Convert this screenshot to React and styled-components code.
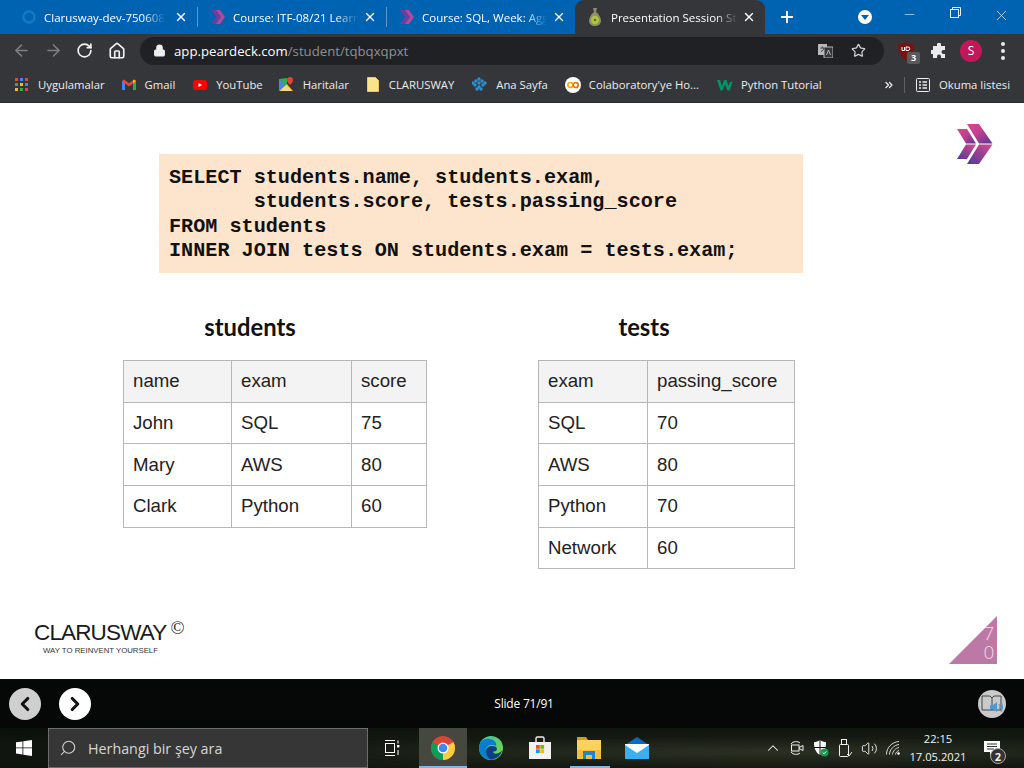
import React from "react";
import styled, { createGlobalStyle } from "styled-components";
import { ArrowLeft, ArrowRight, RotateCw, Home, Lock, Star, Plus, X, Minus, ChevronLeft, ChevronRight, ChevronUp, Search, Volume2, ChevronsRight } from "lucide-react";

const Global = createGlobalStyle`
  html, body { margin: 0; padding: 0; background: #fff; }
  * { box-sizing: border-box; }
  #root { width: 1024px; height: 768px; overflow: hidden; }
`;
const Screen = styled.div`
  width: 1024px; height: 768px; display: flex; flex-direction: column;
  font-family: "Open Sans", "Liberation Sans", sans-serif; position: relative;
`;
const TabBar = styled.div`
  height: 34px; background: #0063b1; display: flex; align-items: stretch; flex: none;
`;
const Tab = styled.div`
  width: ${p => p.$w}px; display: flex; align-items: center; position: relative; padding-left: ${p => p.$pad}px; gap: ${p => p.$gap}px;
  color: #fff; font-size: 11.5px;
  background: ${p => (p.$active ? "#35363a" : "transparent")};
  border-radius: ${p => (p.$active ? "9px 9px 0 0" : "0")};
  ${p => p.$sep && `&::after { content: ""; position: absolute; right: 0; top: 7px; bottom: 7px; width: 1px; background: #5b95c9; }`}
`;
const TabTitle = styled.span`
  width: ${p => p.$w}px; white-space: nowrap; overflow: hidden; flex: none;
  -webkit-mask-image: linear-gradient(90deg, #000 82%, transparent 100%);
  mask-image: linear-gradient(90deg, #000 82%, transparent 100%);
`;
const TabClose = styled.span`
  position: absolute; right: ${p => p.$r}px; top: 10px; display: flex; color: #fff;
`;
const NewTab = styled.div`
  width: 44px; display: flex; align-items: center; justify-content: center; color: #fff;
`;
const TabSpacer = styled.div`flex: 1;`;
const DownBadge = styled.div`
  width: 14px; height: 14px; border-radius: 50%; background: #fff; align-self: center; margin-right: 14px; display: flex; align-items: center; justify-content: center;
  &::after { content: ""; border-left: 4px solid transparent; border-right: 4px solid transparent; border-top: 5px solid #0063b1; }
`;
const WinBtn = styled.div`
  width: 46px; display: flex; align-items: flex-start; padding-top: 7px; justify-content: center; color: #e4eef7;
`;
const Toolbar = styled.div`
  height: 33px; background: #35363a; display: flex; align-items: center; flex: none; padding-left: 12px; color: #fff;
`;
const NavIcon = styled.span`
  width: ${p => p.$w || 32}px; display: flex; color: ${p => (p.$dim ? "#7d7f83" : "#f1f3f4")}; align-items: center;
`;
const UrlPill = styled.div`
  width: 744px; height: 28px; border-radius: 14px; background: #202124; display: flex; align-items: center; padding-left: 13px; font-size: 13.2px; color: #fff; flex: none; position: relative;
`;
const UrlLock = styled.span`display: flex; margin-right: 8px; color: #eee;`;
const UrlDim = styled.span`color: #8f9194;`;
const UrlRight = styled.div`
  margin-left: auto; display: flex; align-items: center; gap: 18px; padding-right: 18px; color: #cfd1d3;
`;
const ExtGroup = styled.div`
  display: flex; align-items: center; margin-left: 14px; position: relative;
`;
const Ub = styled.div`position: relative; width: 16px; height: 18px; margin-right: 17px;`;
const UbCount = styled.span`
  position: absolute; left: 9px; top: 10px; width: 13px; height: 12px; background: #595a5c; color: #fff; font-size: 9px; font-weight: 700; border-radius: 2px; display: flex; align-items: center; justify-content: center;
`;
const Avatar = styled.div`
  width: 22px; height: 22px; border-radius: 50%; background: #c2185b; color: #fff; font-size: 12px; display: flex; align-items: center; justify-content: center; margin-left: 13px;
`;
const Dots = styled.div`
  display: flex; flex-direction: column; gap: 3px; margin-left: 19px;
  & > i { width: 4px; height: 4px; border-radius: 50%; background: #e8eaed; display: block; }
`;
const Bookmarks = styled.div`
  height: 36px; background: #35363a; display: flex; align-items: center; flex: none; font-size: 11.3px; color: #eceded; padding-left: 15px; border-bottom: 1px solid #27282b; position: relative;
`;
const Mark = styled.div`
  display: flex; align-items: center; gap: ${p => p.$gap ?? 9}px; white-space: nowrap; margin-right: ${p => p.$mr ?? 17}px;
`;
const MarkEnd = styled.div`
  margin-left: auto; display: flex; align-items: center; padding-right: 14px; color: #eceded;
`;
const MarkDivider = styled.span`width: 1px; height: 16px; background: #5f6063; margin: 0 11px 0 9px;`;
const ReadingLabel = styled.span`margin-left: 9px; white-space: nowrap;`;

const Slide = styled.main`
  flex: 1; background: #fff; position: relative; display: flex; flex-direction: column; min-height: 0;
`;
const CodeBlock = styled.pre`
  margin: 51px 0 0 159px; width: 644px; height: 119px; background: #fde5cd; color: #111;
  font-family: "Liberation Mono", monospace; font-weight: 700; font-size: 20.17px; line-height: 24.3px; padding: 12px 10px;
`;
const Tables = styled.div`
  display: flex; padding-left: 123px; margin-top: 40px; align-items: flex-start;
`;
const TableCol = styled.section`
  width: ${p => p.$w}px; margin-right: ${p => p.$mr || 0}px; flex: none;
`;
const TableTitle = styled.h2`
  margin: 0 0 18px; width: ${p => p.$tw}px; text-align: center; font-family: "Lato", sans-serif; font-weight: 700; font-size: 23.8px; line-height: 29px; color: #111;
`;
const DataTable = styled.table`
  border-collapse: collapse; table-layout: fixed; width: 100%;
  font-family: "Liberation Sans", Arial, sans-serif; font-size: 18.67px; color: #222;
`;
const Th = styled.th`
  border: 1px solid #b7b7b7; background: #f3f3f3; font-weight: 400; text-align: left; padding: 0 9px; height: 41.7px;
`;
const Td = styled.td`
  border: 1px solid #b7b7b7; padding: 0 9px; height: 41.7px;
`;
const TopLogo = styled.svg`position: absolute; top: 20px; right: 30px;`;
const Footer = styled.div`
  margin-top: auto; padding: 0 0 24px 34px; position: relative;
`;
const Brand = styled.div`
  font-family: "Liberation Sans", Arial, sans-serif; font-size: 22.5px; letter-spacing: -0.85px; line-height: 24px; color: #1a1a1a; display: flex; align-items: flex-start;
`;
const BrandMark = styled.span`
  font-family: "Liberation Serif", serif; font-size: 18.5px; line-height: 16px; margin: -1px 0 0 4px; letter-spacing: 0;
`;
const Tagline = styled.div`
  font-family: "Liberation Sans", Arial, sans-serif; font-size: 7.8px; line-height: 9px; color: #333; padding-left: 9px; margin-top: 1px;
`;
const PageTri = styled.div`
  position: absolute; right: 27px; bottom: 15px; width: 48px; height: 48px; background: #bd79a5;
  clip-path: polygon(100% 0, 100% 100%, 0 100%);
`;
const PageNum = styled.div`
  position: absolute; right: 27px; bottom: 17px; width: 16px; font-family: "Lato", sans-serif; font-weight: 300; font-size: 17px; line-height: 19px; color: #f2e3ec; text-align: center; word-break: break-all;
`;
const SlideBar = styled.div`
  height: 49px; background: #060808; display: flex; align-items: center; flex: none; padding: 0 18px 0 9px; position: relative; color: #fff;
`;
const RoundBtn = styled.div`
  width: 32px; height: 32px; border-radius: 50%; background: ${p => p.$bg}; display: flex; align-items: center; justify-content: center; color: #111; margin-right: ${p => p.$mr || 0}px;
`;
const SlideCount = styled.div`
  position: absolute; left: 0; right: 0; top: 16px; text-align: center; font-size: 12px; line-height: 17px; letter-spacing: -0.2px; padding-left: 24px;
  pointer-events: none;
`;
const AudioBtn = styled.div`
  margin-left: auto; width: 28px; height: 28px; border-radius: 50%; background: #c9c9c9; display: flex; align-items: center; justify-content: center;
`;
const Taskbar = styled.footer`
  height: 40px; flex: none; display: flex; align-items: stretch; color: #fff;
  background: radial-gradient(ellipse at 75% 60%, #2c3024 0%, #141a12 45%, #0b0f0b 100%);
`;
const StartBtn = styled.div`
  width: 48px; display: flex; align-items: center; justify-content: center;
`;
const SearchBox = styled.div`
  width: 320px; background: #363636; border: 1px solid #6d6d6d; display: flex; align-items: center; padding-left: 10px; gap: 11px; font-size: 14.3px; color: #d6d6d6;
`;
const SearchGlyph = styled.span`display: flex; transform: scaleX(-1);`;
const TaskIcon = styled.div`
  width: ${p => p.$w || 48.7}px; flex: none; display: flex; align-items: center; justify-content: center; position: relative;
  padding-right: ${p => p.$pr || 0}px;
  background: ${p => (p.$active ? "#46483f" : "transparent")};
  ${p => p.$under && `&::after { content: ""; position: absolute; left: ${p.$active ? 0 : 6}px; right: ${p.$active ? 0 : 3}px; bottom: 0; height: 2px; background: #76b9ed; }`}
`;
const Tray = styled.div`
  margin-left: auto; display: flex; align-items: stretch; color: #f2f2f2;
`;
const TrayIcon = styled.span`display: flex; width: 24px; justify-content: center; align-items: center;`;
const Clock = styled.div`
  width: 60px; margin-left: 3px; align-self: center; text-align: center; font-size: 11.2px; line-height: 18px; color: #f2f2f2; white-space: nowrap;
`;
const Notify = styled.div`
  width: 56px; padding-right: 8px; display: flex; justify-content: center; align-items: center; position: relative;
`;
const NotifyBadge = styled.span`
  position: absolute; left: 22px; top: 20px; width: 16px; height: 16px; border-radius: 50%; background: #333; border: 1px solid #aaa; font-size: 11px; font-weight: 700; display: flex; align-items: center; justify-content: center;
`;

const DeckIcon = () => (
  <svg width="16" height="16" viewBox="0 0 16 16"><path d="M1 1h6l6 7-6 7H1l5-7z" fill="#6a3f9e" /><path d="M6 1h4l5 7-5 7H6l5-7z" fill="#b04a9d" /></svg>
);
const PearIcon = () => (
  <svg width="14" height="20" viewBox="0 0 14 20"><path d="M5 1h4l-1 4c3 2 5 6 5 9 0 3-3 5-6 5s-6-2-6-5c0-3 2-7 5-9z" fill="#8c8f6a" /><ellipse cx="7" cy="13" rx="4" ry="4.4" fill="#b3c33a" /><circle cx="7" cy="13" r="1.3" fill="#63702a" /></svg>
);
const FolderMark = () => (
  <svg width="12" height="15" viewBox="0 0 12 15"><path d="M0.5 0.5h8l3 3v11h-11z" fill="#f9e38b" stroke="#e8c95a" /></svg>
);
const GridMark = () => (
  <svg width="13" height="13" viewBox="0 0 13 13">
    {[["#ea4335",0,0],["#4285f4",5,0],["#ea4335",10,0],["#34a853",0,5],["#fbbc05",5,5],["#4285f4",10,5],["#fbbc05",0,10],["#34a853",5,10],["#ea4335",10,10]].map(([c,x,y],i)=><rect key={i} x={x} y={y} width="3" height="3" fill={c}/>)}
  </svg>
);
const GmailMark = () => (
  <svg width="14" height="11" viewBox="0 0 14 11"><path d="M0 2v9h3V4.5L7 7.5l4-3V11h3V2L12 .5 7 4.3 2 .5z" fill="#ea4335" /><path d="M0 2v9h3V4.5z" fill="#4285f4" /><path d="M14 2v9h-3V4.5z" fill="#34a853" /><path d="M14 2L12 .5 11 1.2v3.3z" fill="#fbbc05" /></svg>
);
const YtMark = () => (
  <svg width="14" height="10" viewBox="0 0 14 10"><rect width="14" height="10" rx="2.5" fill="#f00" /><path d="M5.5 3v4L9 5z" fill="#fff" /></svg>
);
const MapsMark = () => (
  <svg width="15" height="15" viewBox="0 0 15 15"><path d="M0 2l8-1v13H1z" fill="#34a853" /><path d="M0 14l8-7 6 7z" fill="#fbbc05" /><path d="M1 14l6-6 6 6z" fill="#e8eaed" opacity=".6" /><path d="M0 2l6 6-6 6z" fill="#4285f4" /><path d="M11 0a3 3 0 013 3c0 2-3 5-3 5s-3-3-3-5a3 3 0 013-3z" fill="#ea4335" /></svg>
);
const CrabMark = () => (
  <svg width="15" height="15" viewBox="0 0 15 15">{[[7,2],[4,4],[10,4],[7,6],[3,8],[11,8],[7,10],[5,12],[9,12],[1,6],[13,6]].map(([x,y],i)=><circle key={i} cx={x} cy={y} r="1.7" fill="#2b8fd0"/>)}</svg>
);
const ColabMark = () => (
  <svg width="16" height="16" viewBox="0 0 16 16"><circle cx="8" cy="8" r="8" fill="#fff" /><circle cx="5.3" cy="8" r="2.5" fill="none" stroke="#f9ab00" strokeWidth="1.7" /><circle cx="10.7" cy="8" r="2.5" fill="none" stroke="#e8710a" strokeWidth="1.7" /></svg>
);
const W3Mark = () => (
  <svg width="16" height="12" viewBox="0 0 16 12"><path d="M0 1h3l2 6 2-6h2.5l2 6L13 3h2.5l-3 8.5h-2L8 5.5l-2.5 6h-2z" fill="#04926a" /></svg>
);
const ReadingIcon = () => (
  <svg width="14" height="14" viewBox="0 0 14 14" fill="none" stroke="#eceded"><rect x=".5" y=".5" width="13" height="13" rx="1" /><path d="M3 4h2M3 7h2M3 10h2M6.5 4H11M6.5 7H11M6.5 10H11" strokeWidth="1.3" /></svg>
);
const TranslateIcon = () => (
  <svg width="15" height="14" viewBox="0 0 15 14"><rect x="0" y="0" width="9" height="11" fill="#b7b8ba" /><rect x="6" y="3" width="9" height="11" fill="#35363a" stroke="#b7b8ba" /><path d="M8.5 11l2-5 2 5" fill="none" stroke="#b7b8ba" /><path d="M2.5 4h4M4.5 2.5v1M3 7.5c2-1 3-2.500 3-3.500" stroke="#35363a" fill="none" /></svg>
);
const UblockIcon = () => (
  <svg width="16" height="18" viewBox="0 0 16 18"><path d="M0 2.500C3 2.500 6 1.500 8 0c2 1.500 5 2.500 8 2.500 0 7-2.500 12.500-8 15.500C2.500 15 0 9.500 0 2.500z" fill="#7b1212" /><path d="M4 5v3.500h2.500V5M8 5v3.500h2a1.700 1.700 0 000-3.500z" fill="none" stroke="#fff" /></svg>
);
const PuzzleIcon = () => (
  <svg width="16" height="16" viewBox="0 0 16 16"><path d="M6 1.500a2 2 0 014 0V3h4v4h-1.500a2 2 0 000 4H14v4h-4v-1.500a2 2 0 00-4 0V15H2v-4H.500a2 2 0 010-4H2V3h4z" fill="#e8eaed" /></svg>
);
const ChevronLogo = () => (
  <TopLogo width="38" height="42" viewBox="0 0 38 42">
    <defs>
      <linearGradient id="lg" x1="0" y1="0" x2="1" y2="1">
        <stop offset="0" stopColor="#d8478f" /><stop offset=".45" stopColor="#c0408f" /><stop offset="1" stopColor="#4f3b96" />
      </linearGradient>
      <linearGradient id="lg2" x1="0" y1="1" x2="1" y2="0">
        <stop offset="0" stopColor="#4f3b96" /><stop offset="1" stopColor="#d8478f" />
      </linearGradient>
    </defs>
    <path d="M1 6h10l9 14.500H10z" fill="url(#lg)" />
    <path d="M10 21.500h10l-9 14.500H1z" fill="url(#lg2)" />
    <path d="M11 1h12l13.500 19.500H23z" fill="url(#lg)" />
    <path d="M23 21.500h13.500L23 41H11z" fill="url(#lg2)" />
  </TopLogo>
);
const WinLogo = () => (
  <svg width="16" height="16" viewBox="0 0 16 16"><path d="M0 2.300l6.500-.9v6.100H0zM7.300 1.300L16 0v7.500H7.300zM0 8.300h6.500v6.200L0 13.600zM7.300 8.300H16V16l-8.700-1.300z" fill="#fff" /></svg>
);
const TaskViewIcon = () => (
  <svg width="16" height="16" viewBox="0 0 16 16" fill="none" stroke="#fff"><path d="M1 .500h10M1 15.500h10" /><rect x="1.500" y="3.500" width="9" height="9" /><rect x="13" y="5" width="2.400" height="2.400" fill="#fff" stroke="none" /><path d="M14 .500v3M14 10v5" /></svg>
);
const ChromeIcon = () => (
  <svg width="24" height="24" viewBox="0 0 24 24"><circle cx="12" cy="12" r="12" fill="#db4437" /><path d="M12 12L1.600 6A12 12 0 000 12a12 12 0 0012 12z" fill="#0f9d58" /><path d="M12 12l10.400-6A12 12 0 0124 12a12 12 0 01-12 12z" fill="#ffcd40" /><circle cx="12" cy="12" r="5.500" fill="#fff" /><circle cx="12" cy="12" r="4.300" fill="#4285f4" /></svg>
);
const EdgeIcon = () => (
  <svg width="24" height="24" viewBox="0 0 24 24"><defs><linearGradient id="eg" x1="0" y1="0" x2="1" y2="1"><stop offset="0" stopColor="#37c9a2" /><stop offset="1" stopColor="#7fd43f" /></linearGradient></defs><circle cx="12" cy="12" r="12" fill="url(#eg)" /><path d="M0 12C0 5 6 2 11 3c5 1 7 4 6 7-4-2-10-1-10 5 0 4 4 8 9 8-8 3-16-3-16-11z" fill="#0c7ed0" /><path d="M7 15c0-3 3-5 6-5s5 1 5 3-2 2.500-4 2.500c0 2 4 4 9-1-1 5-6 9-11 9-3-1-5-5-5-8.500z" fill="#0d3f82" /></svg>
);
const StoreIcon = () => (
  <svg width="24" height="24" viewBox="0 0 24 24"><path d="M8 6V2.500A1.500 1.500 0 019.500 1h5A1.500 1.500 0 0116 2.500V6" fill="none" stroke="#eee" strokeWidth="1.400" /><rect x="1" y="6" width="22" height="17" fill="#f2f2f2" /><rect x="8" y="9" width="3.800" height="3.800" fill="#f25022" /><rect x="12.300" y="9" width="3.800" height="3.800" fill="#7fba00" /><rect x="8" y="13.300" width="3.800" height="3.800" fill="#00a4ef" /><rect x="12.300" y="13.300" width="3.800" height="3.800" fill="#ffb900" /></svg>
);
const ExplorerIcon = () => (
  <svg width="24" height="22" viewBox="0 0 24 22"><path d="M0 0h9l2 3h13v4H0z" fill="#d69c1d" /><rect y="3" width="24" height="19" fill="#fbd25e" /><rect y="13" width="24" height="9" fill="#f4bd3c" /><path d="M6 22v-8h12v8h-3v-4H9v4z" fill="#1a86d9" /></svg>
);
const MailIcon = () => (
  <svg width="24" height="22" viewBox="0 0 24 22"><path d="M12 0l12 8H0z" fill="#0a6cc0" /><path d="M0 8h24v14H0z" fill="#3ab0f0" /><path d="M0 8l12 8 12-8v-1H0z" fill="#fff" /></svg>
);
const MeetIcon = () => (
  <svg width="14" height="16" viewBox="0 0 14 16" fill="none" stroke="#f2f2f2"><path d="M1 4C3 1 8 1 10 3M1 12c2 3 7 3 9 1" /><rect x="1.500" y="5" width="7.500" height="6" /><path d="M9 7.500l4-2v5l-4-2" /></svg>
);
const ShieldIcon = () => (
  <svg width="16" height="17" viewBox="0 0 16 17"><path d="M7 0c2 1.500 4 2 6 2.200 0 6-1.500 10-6 12.800C2.500 12.200 1 8.200 1 2.200 3 2 5 1.500 7 0z" fill="#fff" /><path d="M7 0v15M1 7.500h12" stroke="#10140f" /><circle cx="11.500" cy="12.500" r="4" fill="#159b4a" /><path d="M9.700 12.500l1.300 1.300 2.300-2.300" stroke="#fff" fill="none" /></svg>
);
const UsbIcon = () => (
  <svg width="14" height="18" viewBox="0 0 14 18" fill="none" stroke="#f2f2f2"><rect x="3.500" y=".5" width="5" height="5" /><rect x="1.500" y="5.500" width="9" height="12" rx="1" /><path d="M9 15l2 2 3-4" /></svg>
);
const SignalIcon = () => (
  <svg width="14" height="14" viewBox="0 0 14 14" fill="none" stroke="#d8d8d8"><path d="M.5 13.500C.5 6.500 6 1 13 .5M3.500 13.500C3.500 8.500 8 4 13 3.500M6.500 13.500C6.500 10.500 9.500 7 13 6.500M9.500 13.500C9.500 12 11 10 13 9.500" /><circle cx="12.500" cy="12.500" r="1.300" fill="#fff" stroke="none" /></svg>
);
const ChatIcon = () => (
  <svg width="16" height="15" viewBox="0 0 16 15"><path d="M0 0h16v11H9l-3 4v-4H0z" fill="#fff" /><path d="M3 3h10M3 5.500h10M3 8h7" stroke="#333" /></svg>
);
const AudioGlyph = () => (
  <svg width="22" height="22" viewBox="0 0 22 22" fill="none"><path d="M1 3h8l2 2 2-2h7v14H1z" stroke="#444" /><path d="M11 5v12" stroke="#444" /><path d="M9 12h3l4-3v10l-4-3H9z" fill="#4a9ad8" /><path d="M18 11c1 1.500 1 4 0 6M20 9c2 3 2 7 0 10" stroke="#4a9ad8" /></svg>
);

const tabs = [
  { w: 198, pad: 22, gap: 8, t: "Clarusway-dev-750608", tw: 121, sep: true, icon: <svg width="14" height="14" viewBox="0 0 14 14"><circle cx="7" cy="7" r="5.500" fill="none" stroke="#0f7cc4" strokeWidth="2.400" /></svg> },
  { w: 189, pad: 12, gap: 7, t: "Course: ITF-08/21 Learning", tw: 125, sep: true, icon: <DeckIcon /> },
  { w: 188, pad: 12, gap: 7, t: "Course: SQL, Week: Aggregate", tw: 125, icon: <DeckIcon /> },
  { w: 190, pad: 13, gap: 9, t: "Presentation Session Student", tw: 127, active: true, icon: <PearIcon /> },
];
const marks = [
  [<GridMark />, "Uygulamalar", 17, 10],
  [<GmailMark />, "Gmail", 18, 9],
  [<YtMark />, "YouTube", 16, 9],
  [<MapsMark />, "Haritalar", 18, 9],
  [<FolderMark />, "CLARUSWAY", 18, 10],
  [<CrabMark />, "Ana Sayfa", 17, 9],
  [<ColabMark />, "Colaboratory'ye Ho...", 18, 8],
  [<W3Mark />, "Python Tutorial", 0, 8],
];
const students = [["John", "SQL", "75"], ["Mary", "AWS", "80"], ["Clark", "Python", "60"]];
const tests = [["SQL", "70"], ["AWS", "80"], ["Python", "70"], ["Network", "60"]];

const Table = ({ cols, head, rows }) => (
  <DataTable>
    <colgroup>{cols.map((c, i) => <col key={i} style={{ width: c }} />)}</colgroup>
    <thead><tr>{head.map(h => <Th key={h}>{h}</Th>)}</tr></thead>
    <tbody>{rows.map((r, i) => <tr key={i}>{r.map((c, j) => <Td key={j}>{c}</Td>)}</tr>)}</tbody>
  </DataTable>
);

export default function App() {
  return (
    <Screen>
      <Global />
      <TabBar>
        {tabs.map(t => (
          <Tab key={t.t} $w={t.w} $pad={t.pad} $gap={t.gap} $active={t.active} $sep={t.sep}>
            {t.icon}
            <TabTitle $w={t.tw}>{t.t}</TabTitle>
            <TabClose $r={t.sep ? 10 : 9}><X size={14} strokeWidth={2.4} /></TabClose>
          </Tab>
        ))}
        <NewTab><Plus size={18} strokeWidth={2.4} /></NewTab>
        <TabSpacer />
        <DownBadge />
        <WinBtn><Minus size={15} strokeWidth={1} /></WinBtn>
        <WinBtn><svg width="11" height="11" viewBox="0 0 11 11" fill="none" stroke="#e4eef7"><rect x=".5" y="2.500" width="8" height="8" /><path d="M2.500 2.500v-2h8v8h-2" /></svg></WinBtn>
        <WinBtn><X size={17} strokeWidth={1} /></WinBtn>
      </TabBar>
      <Toolbar>
        <NavIcon $dim><ArrowLeft size={19} /></NavIcon>
        <NavIcon $dim><ArrowRight size={19} /></NavIcon>
        <NavIcon><RotateCw size={17} strokeWidth={2.4} /></NavIcon>
        <NavIcon><Home size={18} strokeWidth={2.2} /></NavIcon>
        <UrlPill>
          <UrlLock><Lock size={13} fill="#eee" strokeWidth={2} /></UrlLock>
          app.peardeck.com<UrlDim>/student/tqbqxqpxt</UrlDim>
          <UrlRight><TranslateIcon /><Star size={15} strokeWidth={2} /></UrlRight>
        </UrlPill>
        <ExtGroup>
          <Ub><UblockIcon /><UbCount>3</UbCount></Ub>
          <PuzzleIcon />
          <Avatar>S</Avatar>
          <Dots><i /><i /><i /></Dots>
        </ExtGroup>
      </Toolbar>
      <Bookmarks>
        {marks.map(([icon, label, mr, gap]) => <Mark key={label} $mr={mr} $gap={gap}>{icon}{label}</Mark>)}
        <MarkEnd>
          <ChevronsRight size={12} strokeWidth={2.6} />
          <MarkDivider />
          <ReadingIcon />
          <ReadingLabel>Okuma listesi</ReadingLabel>
        </MarkEnd>
      </Bookmarks>
      <Slide>
        <ChevronLogo />
        <CodeBlock>{`SELECT students.name, students.exam,
       students.score, tests.passing_score
FROM students
INNER JOIN tests ON students.exam = tests.exam;`}</CodeBlock>
        <Tables>
          <TableCol $w={303} $mr={112}>
            <TableTitle $tw={254}>students</TableTitle>
            <Table cols={[108, 120, 75]} head={["name", "exam", "score"]} rows={students} />
          </TableCol>
          <TableCol $w={256}>
            <TableTitle $tw={212}>tests</TableTitle>
            <Table cols={[109, 147]} head={["exam", "passing_score"]} rows={tests} />
          </TableCol>
        </Tables>
        <Footer>
          <Brand>CLARUSWAY<BrandMark>©</BrandMark></Brand>
          <Tagline>WAY TO REINVENT YOURSELF</Tagline>
        </Footer>
        <PageTri />
        <PageNum>70</PageNum>
      </Slide>
      <SlideBar>
        <RoundBtn $bg="#cfcfcf" $mr={18}><ChevronLeft size={22} strokeWidth={3.4} /></RoundBtn>
        <RoundBtn $bg="#fff"><ChevronRight size={22} strokeWidth={3.4} /></RoundBtn>
        <SlideCount>Slide 71/91</SlideCount>
        <AudioBtn><AudioGlyph /></AudioBtn>
      </SlideBar>
      <Taskbar>
        <StartBtn><WinLogo /></StartBtn>
        <SearchBox><SearchGlyph><Search size={18} strokeWidth={1.4} /></SearchGlyph>Herhangi bir şey ara</SearchBox>
        <TaskIcon $w={51} $pr={3}><TaskViewIcon /></TaskIcon>
        <TaskIcon $w={48} $active $under><ChromeIcon /></TaskIcon>
        <TaskIcon><EdgeIcon /></TaskIcon>
        <TaskIcon><StoreIcon /></TaskIcon>
        <TaskIcon $under><ExplorerIcon /></TaskIcon>
        <TaskIcon><MailIcon /></TaskIcon>
        <Tray>
          <TrayIcon><ChevronUp size={18} strokeWidth={1.4} /></TrayIcon>
          <TrayIcon><MeetIcon /></TrayIcon>
          <TrayIcon><ShieldIcon /></TrayIcon>
          <TrayIcon><UsbIcon /></TrayIcon>
          <TrayIcon><Volume2 size={17} strokeWidth={1.3} /></TrayIcon>
          <TrayIcon><SignalIcon /></TrayIcon>
          <Clock>22:15<br />17.05.2021</Clock>
          <Notify><ChatIcon /><NotifyBadge>2</NotifyBadge></Notify>
        </Tray>
      </Taskbar>
    </Screen>
  );
}
